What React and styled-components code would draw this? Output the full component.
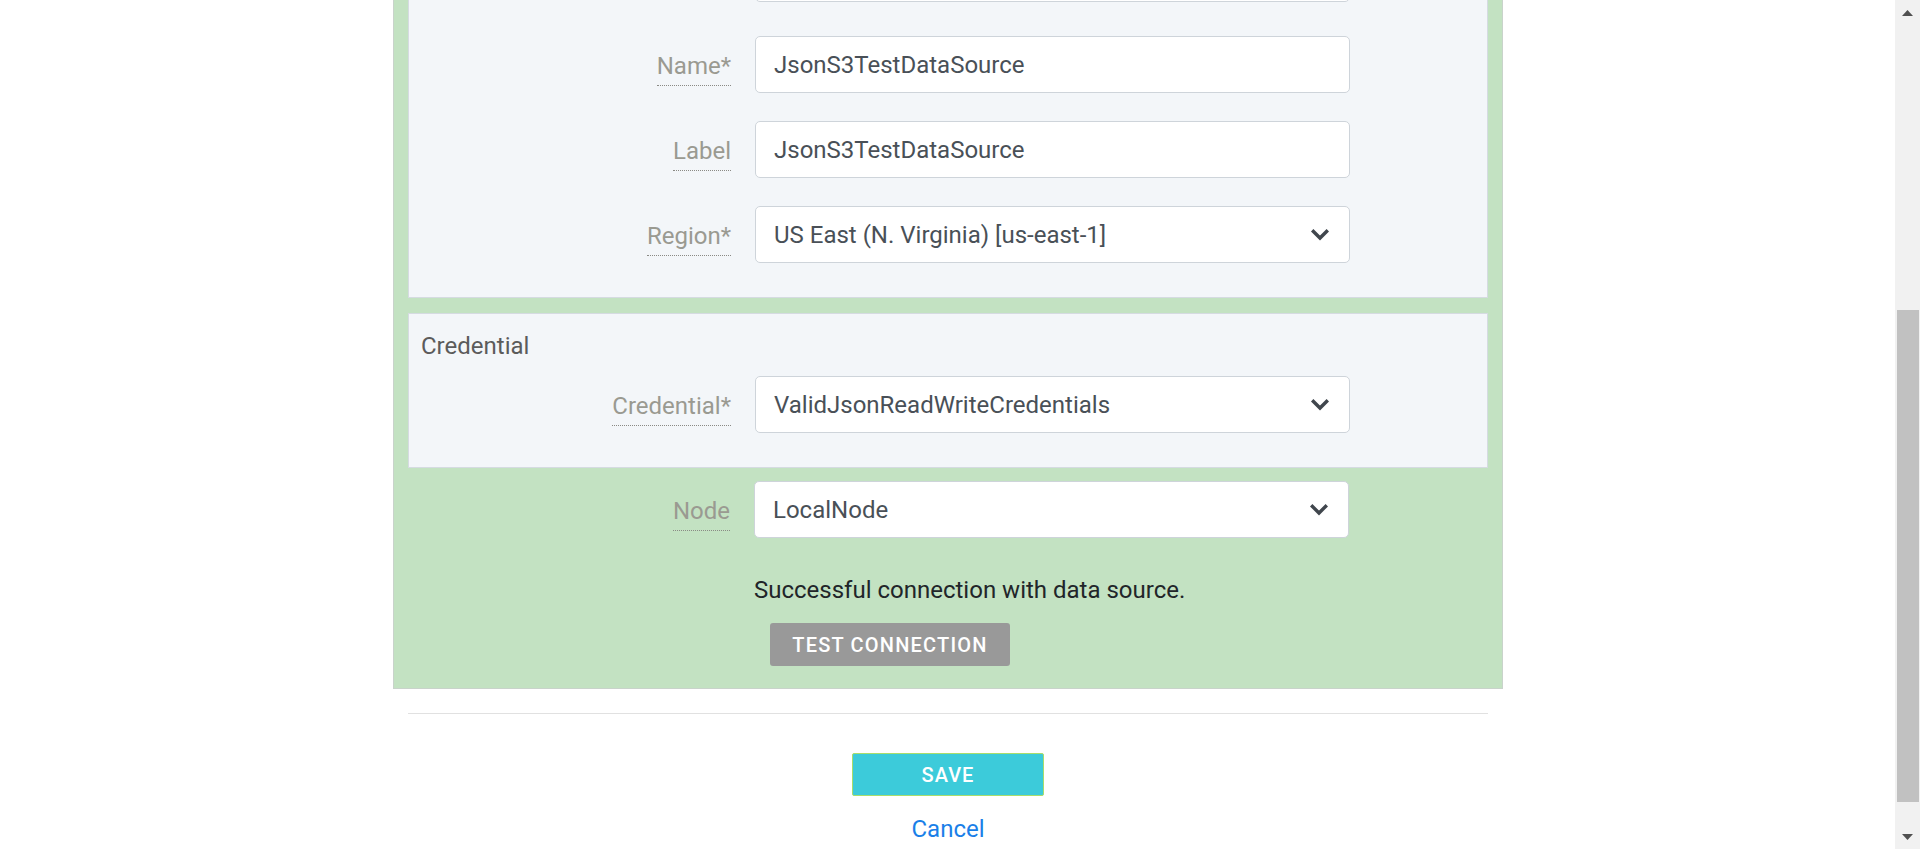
import React from "react";
import styled, { createGlobalStyle } from "styled-components";

const GlobalStyle = createGlobalStyle`
  html, body {
    margin: 0;
    padding: 0;
    height: 100%;
    overflow: hidden;
    background: #ffffff;
  }
  body {
    font-family: Roboto, "Liberation Sans", Arial, sans-serif;
  }
  * {
    box-sizing: border-box;
  }
`;

const Screen = styled.div`
  display: flex;
  height: 100vh;
`;

// page is scrolled to the bottom: content sticks to the bottom edge and the top is cut off
const Viewport = styled.main`
  flex: 1;
  display: flex;
  flex-direction: column;
  justify-content: flex-end;
  align-items: center;
  padding-left: 1px;
  overflow: hidden;
`;

const Column = styled.div`
  width: 1110px;
  flex-shrink: 0;
  display: flex;
  flex-direction: column;
`;

const GreenPanel = styled.section`
  background: #c3e2c2;
  border: 1px solid #c9d3cb;
  padding: 14px 14px 22px;
  display: flex;
  flex-direction: column;
`;

const Card = styled.div`
  background: #f3f6f9;
  border: 1px solid #d5dbe1;
  padding: ${(p) => p.$padTop}px 0 34px;
  margin-bottom: ${(p) => p.$gapBelow || 0}px;
  display: flex;
  flex-direction: column;
  gap: 28px;
`;

const CardTitle = styled.div`
  font-size: 24px;
  line-height: 28px;
  color: #5b5b5b;
  padding-left: 12px;
  margin-bottom: -12px;
`;

const FieldRow = styled.div`
  display: grid;
  grid-template-columns: 322px 595px;
  column-gap: 24px;
  margin-bottom: ${(p) => p.$gapBelow || 0}px;
`;

const LabelCell = styled.div`
  padding-top: 16px;
  text-align: right;
`;

const Label = styled.span`
  display: inline-block;
  font-size: 24px;
  line-height: 28px;
  color: #9a9a91;
  padding-bottom: 5px;
  border-bottom: 1px dotted #8a8a85;
`;

const Field = styled.div`
  height: 57px;
  background: #ffffff;
  border: 1px solid #ced4da;
  border-radius: 5px;
  padding: 0 19px 0 18px;
  display: flex;
  align-items: center;
  justify-content: space-between;
  font-size: 24px;
  color: #495057;
  white-space: nowrap;
`;

const Chevron = () => (
  <svg width="20" height="13" viewBox="0 0 20 13" aria-hidden="true">
    <polyline
      points="2.2,2.2 10,10 17.8,2.2"
      fill="none"
      stroke="#40464d"
      strokeWidth="3.4"
      strokeLinejoin="miter"
    />
  </svg>
);

const ActionArea = styled.div`
  margin: 38px 0 0 346px;
  display: flex;
  flex-direction: column;
  align-items: flex-start;
  gap: 19px;
`;

const StatusText = styled.div`
  font-size: 24px;
  line-height: 28px;
  color: #212529;
`;

const GreyButton = styled.button`
  margin-left: 16px;
  width: 240px;
  height: 43px;
  border: none;
  border-radius: 3px;
  background: #999999;
  color: #ffffff;
  font-family: inherit;
  font-size: 20px;
  font-weight: 500;
  letter-spacing: 1.2px;
  text-transform: uppercase;
`;

const Footer = styled.footer`
  padding: 24px 15px 6px;
  display: flex;
  flex-direction: column;
  align-items: center;
`;

const Divider = styled.hr`
  align-self: stretch;
  margin: 0 0 39px;
  border: none;
  border-top: 1px solid #e1e1e1;
`;

const SaveButton = styled.button`
  width: 192px;
  height: 43px;
  border: 1px solid #a9dd6b;
  border-radius: 2px;
  background: #3ccbda;
  color: #ffffff;
  font-family: inherit;
  font-size: 20px;
  font-weight: 500;
  letter-spacing: 1px;
`;

const CancelLink = styled.a`
  margin-top: 19px;
  font-size: 24px;
  line-height: 28px;
  color: #1a7fe8;
  text-decoration: none;
`;

const Scrollbar = styled.div`
  width: 25px;
  flex-shrink: 0;
  background: #f1f1f1;
  display: flex;
  flex-direction: column;
`;

const ScrollArrow = styled.div`
  height: 25px;
  display: flex;
  align-items: center;
  justify-content: center;
`;

const Track = styled.div`
  flex: 1;
  display: flex;
  flex-direction: column;
  padding: 285px 1px 22px 2px;
`;

const Thumb = styled.div`
  flex: 1;
  background: #c1c1c1;
`;

// first row is scrolled out of view, only its field's bottom edge shows
const fields = [
  { label: "", value: "", gapBelow: 6 },
  { label: "Name*", value: "JsonS3TestDataSource" },
  { label: "Label", value: "JsonS3TestDataSource" },
  { label: "Region*", value: "US East (N. Virginia) [us-east-1]", select: true },
];

function FormField({ label, value, select, gapBelow }) {
  return (
    <FieldRow $gapBelow={gapBelow}>
      <LabelCell>{label && <Label>{label}</Label>}</LabelCell>
      <Field>
        <span>{value}</span>
        {select && <Chevron />}
      </Field>
    </FieldRow>
  );
}

export default function App() {
  return (
    <>
      <GlobalStyle />
      <Screen>
        <Viewport>
          <Column>
            <GreenPanel>
              <Card $padTop={34} $gapBelow={15}>
                {fields.map((f, i) => (
                  <FormField key={i} {...f} />
                ))}
              </Card>
              <Card $padTop={18} $gapBelow={13}>
                <CardTitle>Credential</CardTitle>
                <FormField label="Credential*" value="ValidJsonReadWriteCredentials" select />
              </Card>
              <FormField label="Node" value="LocalNode" select />
              <ActionArea>
                <StatusText>Successful connection with data source.</StatusText>
                <GreyButton>Test Connection</GreyButton>
              </ActionArea>
            </GreenPanel>
            <Footer>
              <Divider />
              <SaveButton>SAVE</SaveButton>
              <CancelLink href="#">Cancel</CancelLink>
            </Footer>
          </Column>
        </Viewport>
        <Scrollbar>
          <ScrollArrow>
            <svg width="11" height="6" viewBox="0 0 11 6">
              <polygon points="0,6 5.5,0 11,6" fill="#505050" />
            </svg>
          </ScrollArrow>
          <Track>
            <Thumb />
          </Track>
          <ScrollArrow>
            <svg width="11" height="6" viewBox="0 0 11 6">
              <polygon points="0,0 11,0 5.5,6" fill="#505050" />
            </svg>
          </ScrollArrow>
        </Scrollbar>
      </Screen>
    </>
  );
}
